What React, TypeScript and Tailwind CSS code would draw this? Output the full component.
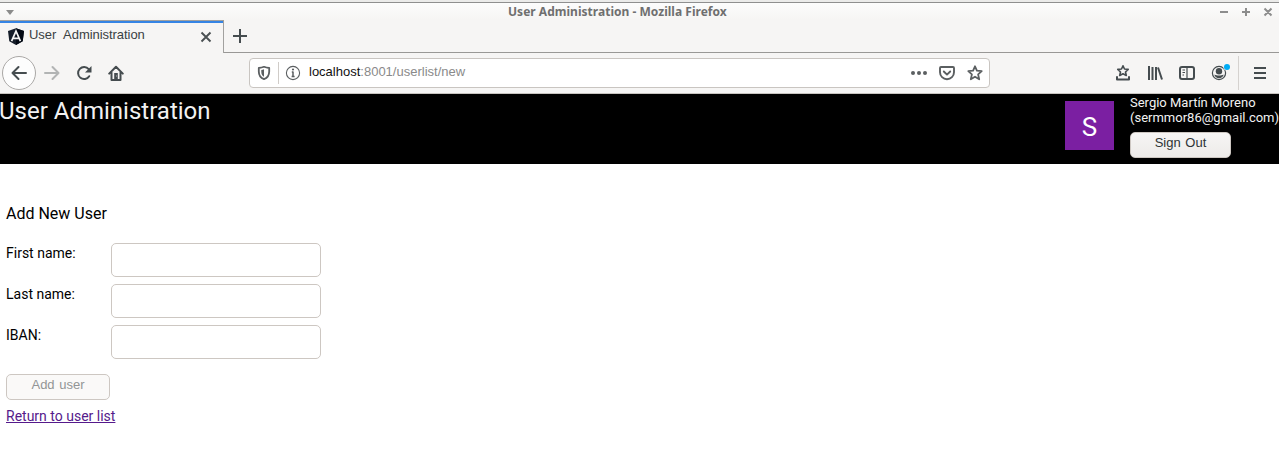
import type { ReactNode } from "react";

function Icon({ children, className = "" }: { children: ReactNode; className?: string }) {
  return (
    <svg
      width="16"
      height="16"
      viewBox="0 0 16 16"
      fill="none"
      stroke="currentColor"
      strokeWidth="2"
      strokeLinecap="round"
      strokeLinejoin="round"
      className={"shrink-0 " + className}
    >
      {children}
    </svg>
  );
}

function TitleBar() {
  return (
    <div className="flex h-[20px] shrink-0 items-start border-t-2 border-[#ebebea]">
      <div className="flex h-[18px] w-full items-start border-t border-[#8f8f8f] bg-linear-to-b from-[#fcfcfc] to-[#f6f5f4]">
        <svg width="8" height="5" viewBox="0 0 8 5" className="mt-[7px] ml-[6px] shrink-0">
          <path d="M0 0h8L4 5z" fill="#8b8b8b" />
        </svg>
        <div className="ml-[494px] w-[226px] whitespace-nowrap font-['Noto_Sans',sans-serif] text-[12px] leading-[17px] font-bold tracking-[0.020px] text-[#6f6f6f]">
          User Administration - Mozilla Firefox
        </div>
        <svg width="60" height="18" viewBox="0 0 60 18" className="mr-[3px] ml-auto shrink-0" fill="none" stroke="#8d8d8d" strokeWidth="2">
          <path d="M4 9h8M26 9h8M30 5v8M48.500 5.500l7 7M55.500 5.500l-7 7" />
        </svg>
      </div>
    </div>
  );
}

function TabStrip() {
  return (
    <div className="flex h-[33px] shrink-0 items-stretch">
      <div className="flex w-[224px] border-t border-r border-[#a2a19f]">
        <div className="flex w-full items-start border-t-2 border-[#3584e4] pt-[5px] pl-[8px]">
          <svg width="16" height="17" viewBox="0 0 16 17" className="shrink-0">
            <path d="M8 0.300L16 3l-1.300 10.300L8 17l-6.700-3.700L0 3z" fill="#151d29" />
            <path d="M8 0.300L16 3l-1.300 10.300L8 17z" fill="#030914" />
            <path d="M3.600 13.100L8 3.200l4.400 9.900M5.500 10.300h5" fill="none" stroke="#f5f5f5" strokeWidth="1.700" />
          </svg>
          <div className="-mt-px ml-[5px] w-[171px] shrink-0 whitespace-pre font-['Liberation_Sans',sans-serif] text-[13px] leading-[15px] tracking-[-0.050px] text-[#3a4143] [word-spacing:4px]">
            User Administration
          </div>
          <svg width="12" height="12" viewBox="0 0 12 12" className="mt-[3px] shrink-0" fill="none" stroke="#4a5052" strokeWidth="1.900">
            <path d="M1.500 1.500l9 9M10.500 1.500l-9 9" />
          </svg>
        </div>
      </div>
      <div className="flex flex-1 border-b border-[#999896] pt-[9px] pl-[9px]">
        <svg width="14" height="14" viewBox="0 0 14 14" fill="none" stroke="#454c4f" strokeWidth="2">
          <path d="M7 0v14M0 7h14" />
        </svg>
      </div>
    </div>
  );
}

function AddressBar() {
  return (
    <div className="mt-[5px] ml-[125px] flex h-[30px] w-[741px] shrink-0 items-center rounded-[4px] border border-[#c9c5c1] bg-white text-[#5b5f61]">
      <Icon className="ml-[6px]">
        <path d="M8 1.800c-2 .9-3.700 1.100-5.200 1.200v3.600c0 4 2 6.500 5.200 7.600 3.200-1.100 5.200-3.600 5.200-7.600V3C11.700 2.900 10 2.700 8 1.800z" strokeWidth="1.800" />
        <path d="M8 4.300v7.400c-1.800-1-2.700-2.600-2.700-5V5.100C6.300 5 7.100 4.700 8 4.300z" fill="currentColor" stroke="none" />
      </Icon>
      <div className="ml-[6px] h-[22px] w-px bg-[#d0ccc8]" />
      <Icon className="ml-[6px] overflow-visible">
        <circle cx="8" cy="8" r="6.600" strokeWidth="1.100" />
        <path d="M6.800 7H8v4.300M6.600 11.500h3" strokeWidth="1.500" strokeLinecap="butt" />
        <circle cx="8" cy="4.500" r="1.100" fill="currentColor" stroke="none" />
      </Icon>
      <div className="ml-[8px] flex-1 pb-[2px] font-['Liberation_Sans',sans-serif] text-[13px] leading-[16px] tracking-[0px] whitespace-nowrap text-[#8a8a8a]">
        <span className="text-[#101010]">localhost</span>:8001/userlist/new
      </div>
      <svg width="16" height="16" viewBox="0 0 16 16" fill="currentColor" className="shrink-0">
        <circle cx="2" cy="8" r="2" />
        <circle cx="8" cy="8" r="2" />
        <circle cx="14" cy="8" r="2" />
      </svg>
      <Icon className="mr-[12px] ml-[12px]">
        <path d="M2 2h12a1 1 0 0 1 1 1v4.200a7 7 0 0 1-14 0V3a1 1 0 0 1 1-1z" strokeWidth="1.900" />
        <path d="M4.800 6.500L8 9.600l3.200-3.100" strokeWidth="1.900" />
      </Icon>
      <Icon className="mr-[6px]">
        <path d="M8 1.300l1.900 4.400 4.800.5-3.600 3.200 1.100 4.900L8 11.700l-4.200 2.600 1.100-4.900L1.300 6.200l4.800-.5z" strokeWidth="1.800" />
      </Icon>
    </div>
  );
}

function Toolbar() {
  return (
    <div className="flex h-[41px] shrink-0 items-start border-b border-[#c8c4c0] text-[#454c4f]">
      <div className="mt-[3px] ml-[2px] flex size-[34px] shrink-0 items-center justify-center rounded-full border border-[#aaa8a6] bg-[#fdfdfd]">
        <Icon>
          <path d="M15 8H1.500M7.500 2L1.500 8l6 6" />
        </Icon>
      </div>
      <Icon className="mt-[12px] ml-[8px] text-[#b2b4b4]">
        <path d="M1 8h13.500M8.500 2l6 6-6 6" />
      </Icon>
      <Icon className="mt-[12px] ml-[16px]">
        <path d="M13.200 11.200A6 6 0 1 1 12.700 4.200" />
        <path d="M15.500 1v6.500H9z" fill="currentColor" stroke="none" />
      </Icon>
      <Icon className="mt-[12px] ml-[16px]">
        <path d="M1.200 8.600L8 1.800l6.800 6.800M3.500 7.500V15h9V7.500" />
        <path d="M6.200 8h3.600v6H6.200z" fill="currentColor" stroke="none" />
        <path d="M8.300 10.500h.6v1h-.6z" fill="#fff" stroke="none" />
      </Icon>
      <AddressBar />
      <Icon className="mt-[12px] ml-[125px]">
        <path d="M8 0.800l1.500 3.200 3.700.4L10.500 7l.8 3.500L8 8.700l-3.300 1.800L5.500 7 2.800 4.400 6.500 4z" strokeWidth="1.600" />
        <path d="M2 12v2.500h12V12" strokeWidth="2" />
      </Icon>
      <Icon className="mt-[12px] ml-[16px]">
        <path d="M2 1v14M5.500 2v13M9 2v13M11 2.500L15 14.500" strokeLinecap="butt" />
      </Icon>
      <Icon className="mt-[12px] ml-[16px]">
        <rect x="1" y="2" width="14" height="12" rx="2" />
        <path d="M8 2v12M3.500 5h2.500M3.500 7.500h2.500M3.500 10H5" strokeWidth="1.200" strokeLinecap="butt" />
      </Icon>
      <svg width="20" height="20" viewBox="0 0 20 20" className="mt-[8px] ml-[16px] shrink-0">
        <circle cx="8" cy="12" r="6.600" fill="none" stroke="#454c4f" strokeWidth="1.200" />
        <circle cx="8" cy="10.300" r="3.200" fill="#454c4f" />
        <path d="M3.300 13.800c1.500-.2 2.500.8 4.700.8s3.200-1 4.700-.8A5.200 5.200 0 0 1 8 17.200a5.200 5.200 0 0 1-4.700-3.400z" fill="#454c4f" />
        <circle cx="16" cy="6" r="3.600" fill="#f6f5f4" />
        <circle cx="16" cy="6" r="3" fill="#00acf5" />
      </svg>
      <div className="mt-[3px] ml-[7px] h-[34px] w-px bg-[#d5d2cf]" />
      <svg width="12" height="12" viewBox="0 0 12 12" className="mt-[14px] ml-[15px]" fill="#454c4f">
        <path d="M0 0h12v2H0zM0 5h12v2H0zM0 10h12v2H0z" />
      </svg>
    </div>
  );
}

function AppHeader() {
  return (
    <header className="flex h-[70px] shrink-0 items-start bg-black text-[#f2f2f2]">
      <h1 className="-ml-px pt-[3px] text-[24px] leading-[28px] whitespace-nowrap">User Administration</h1>
      <div className="mt-[7px] mr-[16px] ml-auto flex size-[49px] items-center justify-center bg-[#7b1fa2] text-[26px] leading-none text-white">
        <span className="translate-y-px">S</span>
      </div>
      <div className="w-[149px] shrink-0 pt-[1px] text-[13px] leading-[15px] whitespace-nowrap">
        <div>Sergio Martín Moreno</div>
        <div>(sermmor86@gmail.com)</div>
        <button className="mt-[7px] h-[26px] w-[101px] rounded-[5px] border border-[#cdc7c2] bg-linear-to-b from-[#f6f5f4] to-[#edebe9] pb-[6px] font-['Liberation_Sans',sans-serif] text-[13px] leading-[15px] text-[#2e3436] [word-spacing:1px]">
          Sign Out
        </button>
      </div>
    </header>
  );
}

function UserForm() {
  return (
    <main className="flex flex-1 flex-col items-start bg-white pt-[40px] pl-[6px] text-[14px] text-black">
      <h2 className="text-[16px] leading-[19px]">Add New User</h2>
      <form className="mt-[20px] flex flex-col items-start gap-[7px]">
        {["First name:", "Last name:", "IBAN:"].map((label) => (
          <label key={label} className="flex h-[34px] items-start">
            <span className="w-[105px] pt-[2px] leading-[16px]">{label}</span>
            <input className="h-[34px] w-[210px] rounded-[5px] border border-[#cdc7c2] bg-white px-2" />
          </label>
        ))}
        <button
          disabled
          className="mt-[8px] h-[26px] w-[104px] rounded-[5px] border border-[#cdc7c2] bg-[#faf9f8] pb-[6px] font-['Liberation_Sans',sans-serif] text-[13px] leading-[15px] text-[#929595] [word-spacing:1px]"
        >
          Add user
        </button>
      </form>
      <a href="#users" className="mt-[8px] leading-[16px] text-[#551a8b] underline">
        Return to user list
      </a>
    </main>
  );
}

export default function App() {
  return (
    <div className="flex h-[459px] w-[1279px] flex-col overflow-hidden bg-[#f6f5f4] font-[Roboto,sans-serif]">
      <TitleBar />
      <TabStrip />
      <Toolbar />
      <AppHeader />
      <UserForm />
    </div>
  );
}
